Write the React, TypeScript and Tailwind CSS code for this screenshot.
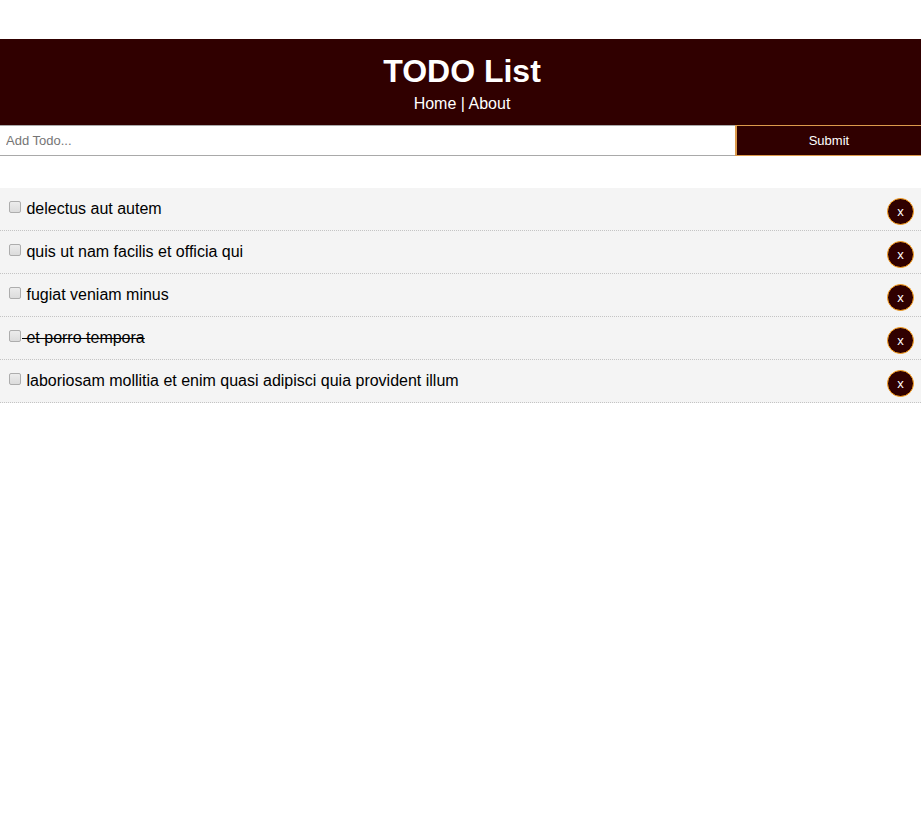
import { useState } from "react";
import type { FormEvent } from "react";

type Todo = { id: number; title: string; completed: boolean };

const initialTodos: Todo[] = [
  { id: 1, title: "delectus aut autem", completed: false },
  { id: 2, title: "quis ut nam facilis et officia qui", completed: false },
  { id: 3, title: "fugiat veniam minus", completed: false },
  { id: 4, title: "et porro tempora", completed: true },
  { id: 5, title: "laboriosam mollitia et enim quasi adipisci quia provident illum", completed: false },
];

function Header() {
  return (
    <header className="bg-[#300000] py-[10px] pr-[10px] pl-[13px] text-center text-white">
      <h1 className="text-[32px] leading-[44px] font-bold">TODO List</h1>
      <nav className="leading-[22px]">
        <a href="#home">Home</a> | <a href="#about">About</a>
      </nav>
    </header>
  );
}

function AddTodo({ onAdd }: { onAdd: (title: string) => void }) {
  const [title, setTitle] = useState("");
  const submit = (e: FormEvent) => {
    e.preventDefault();
    if (title.trim()) onAdd(title.trim());
    setTitle("");
  };
  return (
    <form onSubmit={submit} className="flex h-[31px] text-[13px]">
      <input
        type="text"
        aria-label="Add Todo"
        placeholder="Add Todo..."
        value={title}
        onChange={(e) => setTitle(e.target.value)}
        className="min-w-0 grow border-y border-[#a9a9a9] bg-white px-[6px] outline-none placeholder:text-[#757575]"
      />
      <button type="submit" className="w-1/5 shrink-0 box-content border border-r-0 border-l-2 border-[#dc9a4c] bg-[#300000] text-white">
        Submit
      </button>
    </form>
  );
}

function TodoItem({ todo, onToggle, onDelete }: { todo: Todo; onToggle: () => void; onDelete: () => void }) {
  return (
    <li className="flex items-start justify-between border-b border-dotted border-[#c4c4c4] bg-[#f4f4f4] pt-[10px] pr-[7px] pb-[5px] pl-[9px]">
      <label className="leading-[22px]">
        <input
          type="checkbox"
          onChange={onToggle}
          className="mr-px size-3 appearance-none rounded-[2px] border border-[#adadad] bg-linear-to-b from-[#ececec] to-[#dcdcdc] align-[1px] checked:bg-[#777777]"
        />
        <span className={todo.completed ? "whitespace-pre line-through" : "whitespace-pre"}>{" " + todo.title}</span>
      </label>
      <button
        type="button"
        aria-label={"Delete " + todo.title}
        onClick={onDelete}
        className="size-[27px] shrink-0 rounded-full border border-[#ffa51f] bg-[#300000] text-[13px] text-white"
      >
        x
      </button>
    </li>
  );
}

export default function App() {
  const [todos, setTodos] = useState(initialTodos);
  return (
    <main className="min-h-screen bg-white pt-[39px] font-['Liberation_Sans',Arial,sans-serif] text-base text-black">
      <Header />
      <AddTodo onAdd={(title) => setTodos([...todos, { id: Date.now(), title, completed: false }])} />
      <ul className="mt-8">
        {todos.map((todo) => (
          <TodoItem
            key={todo.id}
            todo={todo}
            onToggle={() => setTodos(todos.map((t) => (t.id === todo.id ? { ...t, completed: !t.completed } : t)))}
            onDelete={() => setTodos(todos.filter((t) => t.id !== todo.id))}
          />
        ))}
      </ul>
    </main>
  );
}
